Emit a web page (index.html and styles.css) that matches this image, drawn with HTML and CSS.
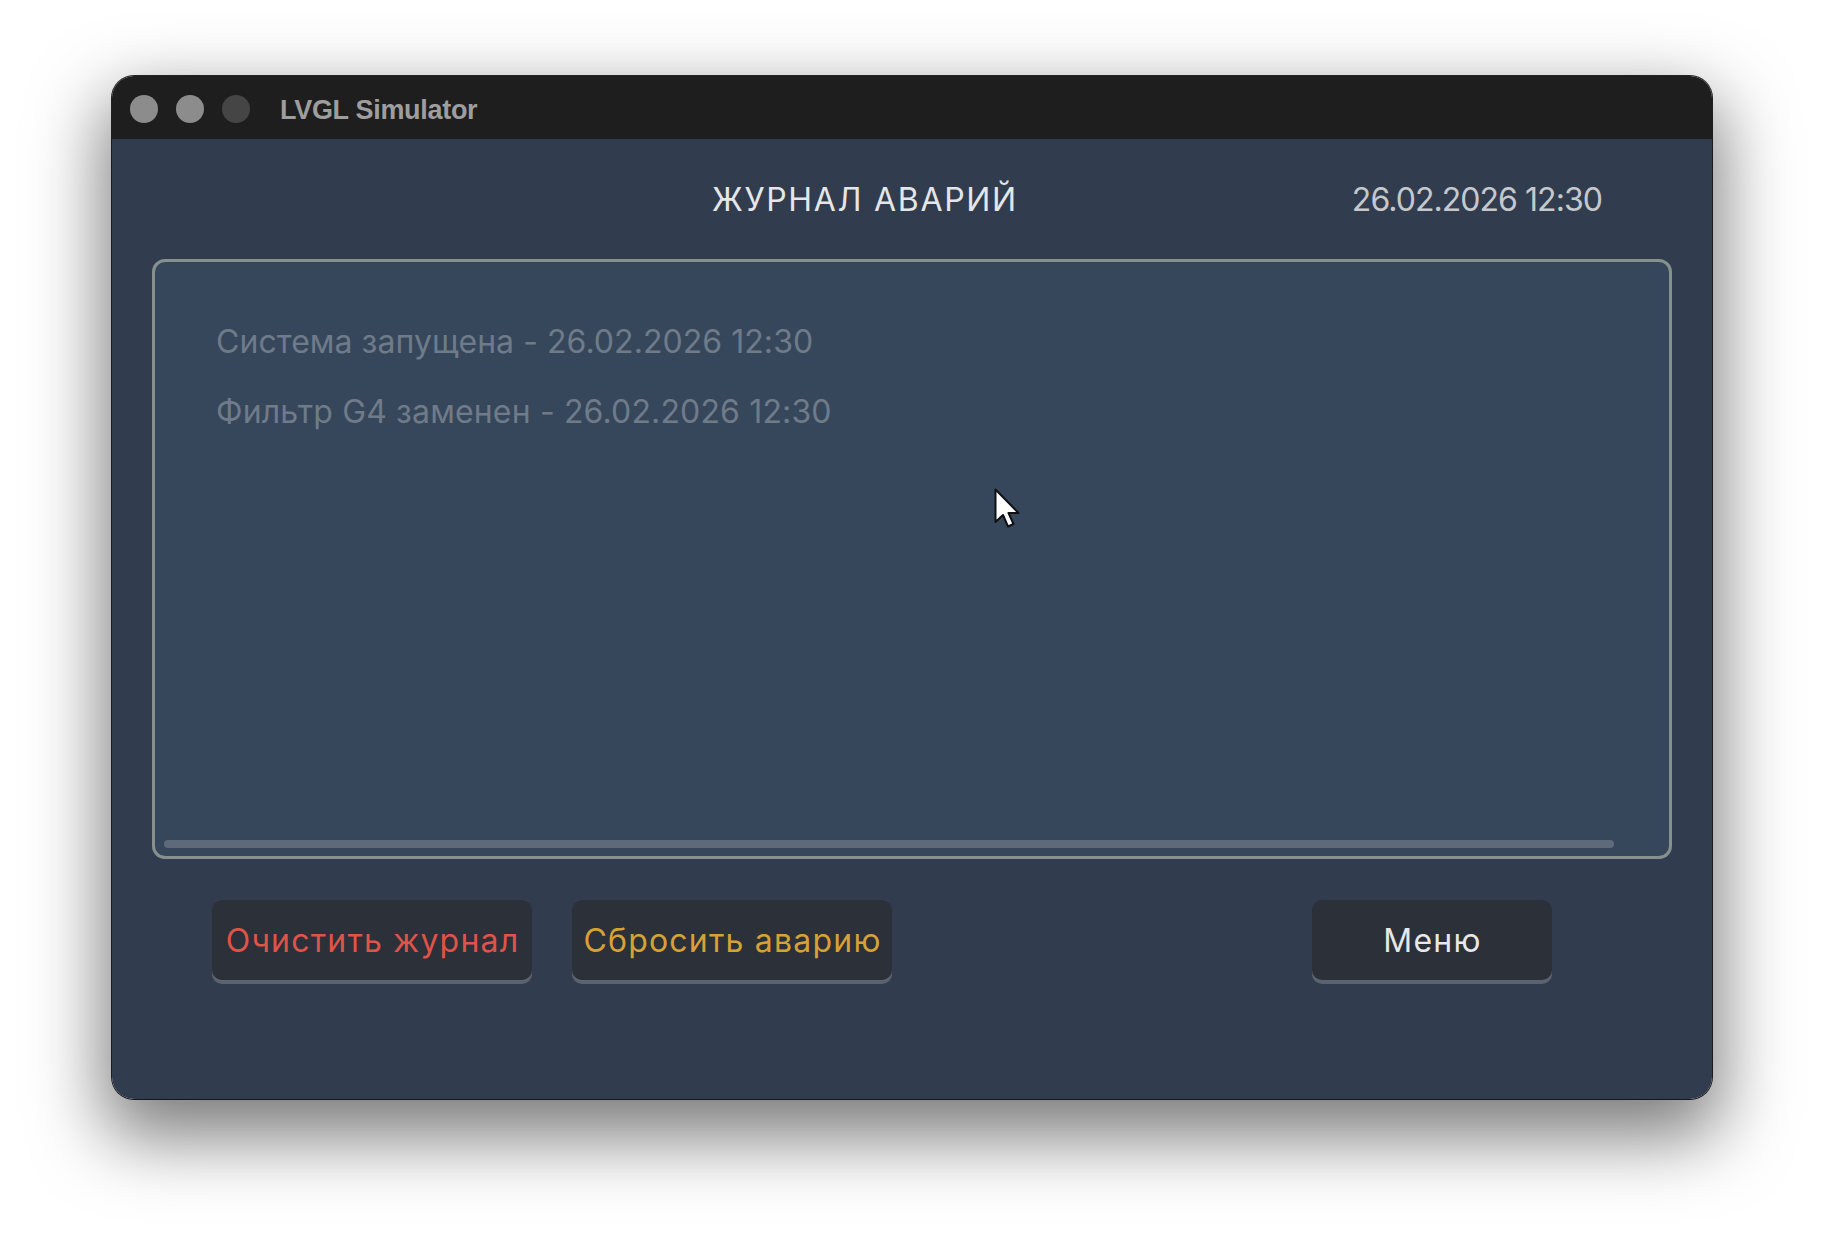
FILE: index.html
```html
<!DOCTYPE html>
<html lang="ru">
<head>
<meta charset="utf-8">
<title>LVGL Simulator</title>
<link rel="stylesheet" href="styles.css">
</head>
<body>
  <div class="window">
    <div class="titlebar">
      <div class="lights">
        <span class="light light-grey"></span>
        <span class="light light-grey"></span>
        <span class="light light-dark"></span>
      </div>
      <div class="wtitle">LVGL Simulator</div>
    </div>
    <div class="screen">
      <div class="header">
        <div class="heading">ЖУРНАЛ АВАРИЙ</div>
        <div class="clock">26.02.2026 12:30</div>
      </div>
      <div class="log">
        <div class="log-line">Система запущена - 26.02.2026 12:30</div>
        <div class="log-line log-line-2">Фильтр G4 заменен - 26.02.2026 12:30</div>
        <div class="scrollbar"></div>
      </div>
      <div class="actions">
        <button class="btn btn-red">Очистить журнал</button>
        <button class="btn btn-yellow">Сбросить аварию</button>
        <button class="btn btn-menu">Меню</button>
      </div>
      <svg class="cursor" width="30" height="42" viewBox="0 0 30 42">
        <path d="M1.5 1.5 L1.5 34 L9 27 L14 38.5 L19.5 36 L14.5 25 L24.5 25 Z" fill="#ffffff" stroke="#111111" stroke-width="2" stroke-linejoin="round"/>
      </svg>
    </div>
  </div>
</body>
</html>
```

FILE: styles.css
```css
html, body {
  margin: 0;
  padding: 0;
}

body {
  background: #ffffff;
  width: 1824px;
  height: 1248px;
  padding: 76px 0 0 112px;
  box-sizing: border-box;
  overflow: hidden;
}

.window {
  width: 1600px;
  height: 1023px;
  border-radius: 22px;
  overflow: hidden;
  box-shadow: 0 0 0 1px rgba(0, 0, 0, 0.85), 0 30px 72px 8px rgba(0, 0, 0, 0.52);
  display: flex;
  flex-direction: column;
}

.titlebar {
  height: 63px;
  box-sizing: border-box;
  padding: 3px 0 0 18px;
  background: #1e1e1e;
  display: flex;
  align-items: center;
  flex-shrink: 0;
}

.lights {
  display: flex;
  gap: 18px;
}

.light {
  width: 28px;
  height: 28px;
  border-radius: 50%;
  display: block;
}

.light-grey {
  background: #8c8c8c;
}

.light-dark {
  background: #454545;
}

.wtitle {
  margin-left: 30px;
  padding-top: 2px;
  font-family: "Liberation Sans", Arial, sans-serif;
  font-weight: bold;
  font-size: 27px;
  letter-spacing: -0.3px;
  color: #9e9e9e;
}

.screen {
  position: relative;
  height: 960px;
  background: #313d4e;
  font-family: Inter, "Noto Sans", sans-serif;
  font-size: 32px;
}

.header {
  height: 120px;
  display: flex;
  align-items: center;
  padding: 0 110px 0 600px;
}

.heading {
  color: #e4e6e8;
  letter-spacing: 1.7px;
}

.clock {
  margin-left: auto;
  color: #c5c9cd;
  letter-spacing: -0.95px;
}

.log {
  position: relative;
  margin: 0 40px;
  height: 600px;
  box-sizing: border-box;
  border: 3px solid #86918f;
  border-radius: 13px;
  background: #36475c;
  padding: 45px 0 0 61px;
}

.log-line {
  line-height: 70px;
  color: #6f7b89;
  letter-spacing: 0.05px;
}

.log-line-2 {
  letter-spacing: 0.15px;
}

.scrollbar {
  position: absolute;
  left: 9px;
  bottom: 8px;
  width: 1450px;
  height: 8px;
  border-radius: 4px;
  background: #5e6a79;
}

.actions {
  display: flex;
  padding: 41px 160px 0 100px;
  gap: 40px;
}

.btn {
  height: 80px;
  border: none;
  border-radius: 10px;
  background: #2c3039;
  box-shadow: 0 4px 0 #5b636e;
  font-family: Inter, "Noto Sans", sans-serif;
  font-size: 32px;
  padding: 0 0 0 1px;
  letter-spacing: 1.2px;
}

.btn-red {
  width: 320px;
  color: #df5448;
}

.btn-yellow {
  width: 320px;
  color: #d6a236;
}

.btn-menu {
  width: 240px;
  margin-left: auto;
  color: #e8e8e8;
}

.cursor {
  position: absolute;
  left: 882px;
  top: 349px;
}
```
